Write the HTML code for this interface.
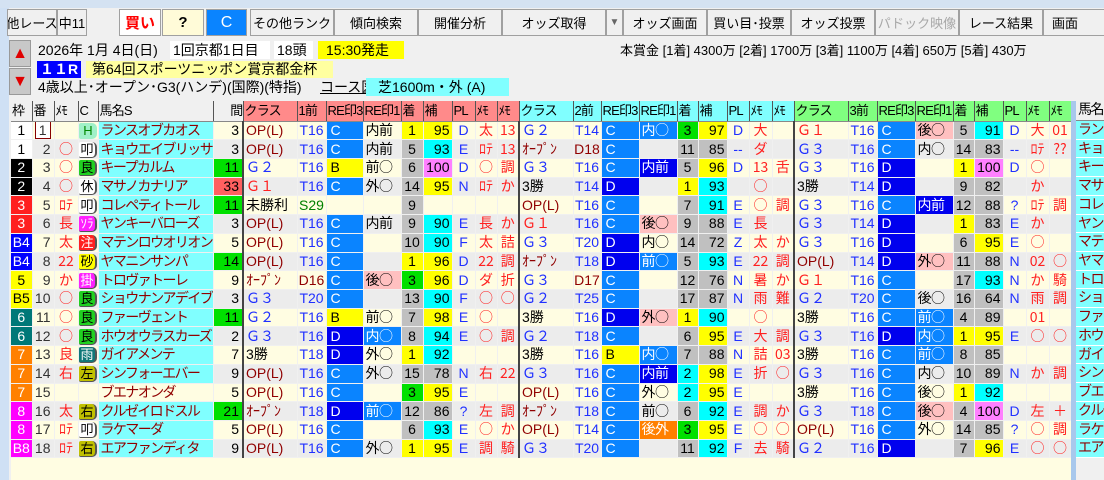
<!DOCTYPE html>
<html><head><meta charset="utf-8">
<style>
*{margin:0;padding:0;box-sizing:border-box}
body{width:1104px;height:480px;overflow:hidden;background:#f0f0f0;font-family:"Liberation Sans","Noto Sans CJK JP",sans-serif;position:relative;color:#000}
.title{position:absolute;left:0;top:0;width:1104px;height:8px;background:#d4e2f2}
.lb{position:absolute;left:0;top:8px;width:9px;height:472px;background:#cfe0f4}
.btn{position:absolute;top:9px;height:27px;border:1px solid #a0a0a0;background:#f0f0f0;font-size:13px;display:flex;align-items:center;justify-content:center;white-space:nowrap;overflow:hidden}
.abs{position:absolute;font-size:14px;white-space:nowrap;line-height:17px}
.box{position:absolute;height:18px;font-size:14px;line-height:18px;white-space:nowrap}
.arrow{position:absolute;left:9px;width:22px;height:27px;background:#c8c8c8;border:1px solid #999;color:#e00000;font-size:16px;text-align:center;line-height:25px}
table{position:absolute;left:11px;top:101px;border-collapse:collapse;table-layout:fixed;font-size:14px;width:1060px}
td{height:18.72px;padding:0;border-right:1px solid transparent;border-bottom:1px solid transparent;background-clip:padding-box;white-space:nowrap;overflow:hidden;line-height:17px;text-align:center}
tr.h td{height:20px;font-size:13px;letter-spacing:-0.8px;text-align:left;padding-left:1px;border-right:1px solid #555;border-bottom:1px solid #888}
tr.h td.n{background:#f0f0f0}
tr.h td.r{background:#ff8a8a}
tr.h td.cy{background:#80ffff}
tr.h td.gn{background:#80ff80}
tr.o{background:#fffde2}
tr.e{background:#ececec}
.k{border-left:2px solid #444!important;text-align:left;padding-left:2px}
.f1{background:#fff;color:#000}.f2{background:#000;color:#fff}.f3{background:#ff2020;color:#fff}.f4{background:#0000ff;color:#fff}.f5{background:#ffff00;color:#000}.f6{background:#007878;color:#fff}.f7{background:#ff8000;color:#fff}.f8{background:#ff00ff;color:#fff}
.num{color:#333;text-align:right;padding-right:3px}
.me{color:#ff2020;font-family:"Noto Sans CJK JP","Liberation Sans",sans-serif;font-size:14px;line-height:17px}
.r1{font-family:"Noto Sans CJK JP",sans-serif;text-align:left;padding-left:2px;letter-spacing:-0.5px}
.ic{display:inline-block;width:18px;height:16px;line-height:16px;font-size:13px;border-radius:2px 5px 5px 2px;border-right:2px solid #555;border-bottom:1px solid #555}
.iw{background:#fff}.ig{background:#20d020}.im{background:#ff20ff;color:#fff}.ir{background:#ff2020;color:#fff}.iy{background:#ffff00}.it{background:#107878;color:#fff}.io{background:#c0c000}.ih{background:#a0f0c8;color:#080;border:none}
.nm{background:#80ffff;color:#900000;text-align:left;padding-left:2px;letter-spacing:-1.6px}
.ma{text-align:right;padding-right:3px}
.G{background:#00e000}.R{background:#ff6060}
.tm{color:#900000}.tb{color:#2030ff}.tr{color:#ff2020}.tg{color:#008000}
.C{background:#0a84ff;color:#fff;text-align:left;padding-left:4px}
.D{background:#0000ee;color:#fff;text-align:left;padding-left:4px}
.B{background:#ffff00;text-align:left;padding-left:4px}
.pk{background:#ffc0c0}.bl{background:#0a84ff;color:#fff}.db{background:#0000ee;color:#fff}.or{background:#ff8000;color:#fff}
.g{background:#c0c0c0}.y{background:#ffff00}.c{background:#00ffff}.gr{background:#00e000}.m{background:#ff80ff}
.hs{text-align:right;padding-right:2px}
.pl{color:#2030ff}
.sb{position:absolute;left:1071px;top:101px;width:5px;height:379px;background:#a8c8ec}
.rn{position:absolute;left:1076px;top:101px;width:28px;font-size:14px}
.rn div{height:18.72px;background:#80ffff;color:#900000;overflow:hidden;white-space:nowrap;border-bottom:1px solid #fff;line-height:17px;padding-left:2px;letter-spacing:-1.5px}
.bot{position:absolute;left:11px;top:458px;width:1060px;height:22px;background:#fffde2}
</style></head><body>
<div class="title"></div>
<div class="lb"></div>
<div class="btn" style="left:7px;width:50px">他レース</div>
<div class="btn" style="left:57px;width:30px">中11</div>
<div class="btn" style="left:119px;width:42px;background:#fff;color:#ff0000;font-weight:bold;font-size:15px">買い</div>
<div class="btn" style="left:162px;width:42px;background:#fffbd8;font-weight:bold;font-size:15px">?</div>
<div class="btn" style="left:206px;width:41px;background:#0a84ff;color:#fff;font-size:16px">C</div>
<div class="btn" style="left:250px;width:84px">その他ランク</div>
<div class="btn" style="left:334px;width:84px">傾向検索</div>
<div class="btn" style="left:418px;width:84px">開催分析</div>
<div class="btn" style="left:502px;width:104px">オッズ取得</div>
<div class="btn" style="left:606px;width:17px;color:#666;font-size:10px">▼</div>
<div class="btn" style="left:623px;width:84px">オッズ画面</div>
<div class="btn" style="left:707px;width:84px">買い目･投票</div>
<div class="btn" style="left:791px;width:84px">オッズ投票</div>
<div class="btn" style="left:875px;width:84px;color:#a8a8a8">パドック映像</div>
<div class="btn" style="left:959px;width:84px">レース結果</div>
<div class="btn" style="left:1043px;width:70px;justify-content:flex-start;padding-left:8px">画面</div>

<div class="arrow" style="top:40px">▲</div>
<div class="arrow" style="top:68px">▼</div>
<div class="abs" style="left:38px;top:42px">2026年 1月 4日(日)</div>
<div class="box" style="left:170px;top:41px;width:100px;background:#fff;padding-left:3px">1回京都1日目</div>
<div class="box" style="left:274px;top:41px;width:39px;background:#fff;padding-left:3px">18頭</div>
<div class="box" style="left:318px;top:41px;width:86px;background:#ffff00;padding-left:8px">15:30発走</div>
<div class="box" style="left:37px;top:61px;width:44px;background:#0000ff;color:#fff;font-weight:bold;padding-left:3px;height:17px;line-height:17px">１１R</div>
<div class="box" style="left:86px;top:61px;width:247px;background:#ffffa0;padding-left:6px;height:17px;line-height:17px">第64回スポーツニッポン賞京都金杯</div>
<div class="abs" style="left:38px;top:79px">4歳以上･オープン･G3(ハンデ)(国際)(特指)</div>
<div class="abs" style="left:320px;top:79px;text-decoration:underline">コース図</div>
<div class="box" style="left:366px;top:78px;width:143px;background:#80ffff;padding-left:12px">芝1600m・外 (A)</div>
<div class="abs" style="left:620px;top:42px;font-size:13px">本賞金 [1着] 4300万 [2着] 1700万 [3着] 1100万 [4着] 650万 [5着] 430万</div>

<div class="bot"></div>
<table>
<colgroup><col style="width:21px"><col style="width:22px"><col style="width:24px"><col style="width:20px"><col style="width:115px"><col style="width:30px"><col style="width:54px"><col style="width:29px"><col style="width:37px"><col style="width:38px"><col style="width:22px"><col style="width:29px"><col style="width:23px"><col style="width:22px"><col style="width:22px"><col style="width:54px"><col style="width:28px"><col style="width:38px"><col style="width:38px"><col style="width:21px"><col style="width:29px"><col style="width:22px"><col style="width:23px"><col style="width:22px"><col style="width:54px"><col style="width:29px"><col style="width:38px"><col style="width:38px"><col style="width:21px"><col style="width:29px"><col style="width:23px"><col style="width:23px"><col style="width:22px"></colgroup>
<tr class="h"><td class="n">枠</td><td class="n">番</td><td class="n">ﾒﾓ</td><td class="n">C</td><td class="n">馬名S</td><td class="n" style="text-align:right">間</td><td class="r">クラス</td><td class="r">1前</td><td class="r">RE印3</td><td class="r">RE印1</td><td class="r">着</td><td class="r">補</td><td class="r">PL</td><td class="r">ﾒﾓ</td><td class="r">ﾒﾓ</td><td class="cy">クラス</td><td class="cy">2前</td><td class="cy">RE印3</td><td class="cy">RE印1</td><td class="cy">着</td><td class="cy">補</td><td class="cy">PL</td><td class="cy">ﾒﾓ</td><td class="cy">ﾒﾓ</td><td class="gn">クラス</td><td class="gn">3前</td><td class="gn">RE印3</td><td class="gn">RE印1</td><td class="gn">着</td><td class="gn">補</td><td class="gn">PL</td><td class="gn">ﾒﾓ</td><td class="gn">ﾒﾓ</td></tr>

<tr class="o"><td class="f1">1</td><td class="num"><span style="border:1px solid #800;padding:0 3px;background:#fff">1</span></td><td class="me"></td><td><span class="ic ih">H</span></td><td class="nm">ランスオブカオス</td><td class="ma">3</td>
<td class="k tm">OP(L)</td><td class="tb">T16</td><td class="C">C</td><td class="r1">内前</td><td class="y">1</td><td class="y hs">95</td><td class="pl">D</td><td class="me">太</td><td class="me">13</td>
<td class="k tb">Ｇ２</td><td class="tb">T14</td><td class="C">C</td><td class="r1 bl">内○</td><td class="gr">3</td><td class="y hs">97</td><td class="pl">D</td><td class="me">大</td><td class="me"></td>
<td class="k tr">Ｇ１</td><td class="tb">T16</td><td class="C">C</td><td class="r1 pk">後○</td><td class="g">5</td><td class="c hs">91</td><td class="pl">D</td><td class="me">大</td><td class="me">01</td></tr>

<tr class="e"><td class="f1">1</td><td class="num">2</td><td class="me">○</td><td><span class="ic iw">叩</span></td><td class="nm">キョウエイブリッサ</td><td class="ma">3</td>
<td class="k tm">OP(L)</td><td class="tb">T16</td><td class="C">C</td><td class="r1">内前</td><td class="g">5</td><td class="c hs">93</td><td class="pl">E</td><td class="me">ﾛﾃ</td><td class="me">13</td>
<td class="k tm">ｵｰﾌﾟﾝ</td><td class="tm">D18</td><td class="C">C</td><td class="r1"></td><td class="g">11</td><td class="g hs">85</td><td class="pl">--</td><td class="me">ダ</td><td class="me"></td>
<td class="k tb">Ｇ３</td><td class="tb">T16</td><td class="C">C</td><td class="r1">内○</td><td class="g">14</td><td class="g hs">83</td><td class="pl">--</td><td class="me">ﾛﾃ</td><td class="me">??</td></tr>

<tr class="o"><td class="f2">2</td><td class="num">3</td><td class="me">○</td><td><span class="ic ig">良</span></td><td class="nm">キープカルム</td><td class="ma G">11</td>
<td class="k tb">Ｇ２</td><td class="tb">T16</td><td class="B">B</td><td class="r1">前○</td><td class="g">6</td><td class="m hs">100</td><td class="pl">D</td><td class="me">○</td><td class="me">調</td>
<td class="k tb">Ｇ３</td><td class="tb">T16</td><td class="C">C</td><td class="r1 db">内前</td><td class="g">5</td><td class="y hs">96</td><td class="pl">D</td><td class="me">13</td><td class="me">舌</td>
<td class="k tb">Ｇ３</td><td class="tb">T16</td><td class="D">D</td><td class="r1"></td><td class="y">1</td><td class="m hs">100</td><td class="pl">D</td><td class="me">○</td><td class="me"></td></tr>

<tr class="e"><td class="f2">2</td><td class="num">4</td><td class="me">○</td><td><span class="ic iw">休</span></td><td class="nm">マサノカナリア</td><td class="ma R">33</td>
<td class="k tr">Ｇ１</td><td class="tb">T16</td><td class="C">C</td><td class="r1">外○</td><td class="g">14</td><td class="y hs">95</td><td class="pl">N</td><td class="me">ﾛﾃ</td><td class="me">か</td>
<td class="k">3勝</td><td class="tb">T14</td><td class="D">D</td><td class="r1"></td><td class="y">1</td><td class="c hs">93</td><td class="pl"></td><td class="me">○</td><td class="me"></td>
<td class="k">3勝</td><td class="tb">T14</td><td class="D">D</td><td class="r1"></td><td class="g">9</td><td class="g hs">82</td><td class="pl"></td><td class="me">か</td><td class="me"></td></tr>

<tr class="o"><td class="f3">3</td><td class="num">5</td><td class="me">ﾛﾃ</td><td><span class="ic iw">叩</span></td><td class="nm">コレペティトール</td><td class="ma G">11</td>
<td class="k">未勝利</td><td class="tg">S29</td><td></td><td class="r1"></td><td class="g">9</td><td></td><td class="pl"></td><td class="me"></td><td class="me"></td>
<td class="k tm">OP(L)</td><td class="tb">T16</td><td class="C">C</td><td class="r1"></td><td class="g">7</td><td class="c hs">91</td><td class="pl">E</td><td class="me">○</td><td class="me">調</td>
<td class="k tb">Ｇ３</td><td class="tb">T16</td><td class="C">C</td><td class="r1 db">内前</td><td class="g">12</td><td class="g hs">88</td><td class="pl">?</td><td class="me">ﾛﾃ</td><td class="me">調</td></tr>

<tr class="e"><td class="f3">3</td><td class="num">6</td><td class="me">長</td><td><span class="ic im">ｿﾗ</span></td><td class="nm">ヤンキーバローズ</td><td class="ma">3</td>
<td class="k tm">OP(L)</td><td class="tb">T16</td><td class="C">C</td><td class="r1">内前</td><td class="g">9</td><td class="c hs">90</td><td class="pl">E</td><td class="me">長</td><td class="me">か</td>
<td class="k tr">Ｇ１</td><td class="tb">T16</td><td class="C">C</td><td class="r1 pk">後○</td><td class="g">9</td><td class="g hs">88</td><td class="pl">E</td><td class="me">長</td><td class="me"></td>
<td class="k tb">Ｇ３</td><td class="tb">T14</td><td class="D">D</td><td class="r1"></td><td class="y">1</td><td class="g hs">83</td><td class="pl">E</td><td class="me">か</td><td class="me"></td></tr>

<tr class="o"><td class="f4">B4</td><td class="num">7</td><td class="me">太</td><td><span class="ic ir">注</span></td><td class="nm">マテンロウオリオン</td><td class="ma">5</td>
<td class="k tm">OP(L)</td><td class="tb">T16</td><td class="C">C</td><td class="r1"></td><td class="g">10</td><td class="c hs">90</td><td class="pl">F</td><td class="me">太</td><td class="me">詰</td>
<td class="k tb">Ｇ３</td><td class="tb">T20</td><td class="D">D</td><td class="r1">内○</td><td class="g">14</td><td class="g hs">72</td><td class="pl">Z</td><td class="me">太</td><td class="me">か</td>
<td class="k tb">Ｇ３</td><td class="tb">T16</td><td class="D">D</td><td class="r1"></td><td class="g">6</td><td class="y hs">95</td><td class="pl">E</td><td class="me">○</td><td class="me"></td></tr>

<tr class="e"><td class="f4">B4</td><td class="num">8</td><td class="me">22</td><td><span class="ic iy">砂</span></td><td class="nm">ヤマニンサンパ</td><td class="ma G">14</td>
<td class="k tm">OP(L)</td><td class="tb">T16</td><td class="C">C</td><td class="r1"></td><td class="y">1</td><td class="y hs">96</td><td class="pl">D</td><td class="me">22</td><td class="me">調</td>
<td class="k tm">ｵｰﾌﾟﾝ</td><td class="tb">T18</td><td class="D">D</td><td class="r1 bl">前○</td><td class="g">5</td><td class="c hs">93</td><td class="pl">E</td><td class="me">22</td><td class="me">調</td>
<td class="k tm">OP(L)</td><td class="tb">T14</td><td class="D">D</td><td class="r1 pk">外○</td><td class="g">11</td><td class="g hs">88</td><td class="pl">N</td><td class="me">02</td><td class="me">○</td></tr>

<tr class="o"><td class="f5">5</td><td class="num">9</td><td class="me">か</td><td><span class="ic im">掛</span></td><td class="nm">トロヴァトーレ</td><td class="ma">9</td>
<td class="k tm">ｵｰﾌﾟﾝ</td><td class="tm">D16</td><td class="C">C</td><td class="r1 pk">後○</td><td class="gr">3</td><td class="y hs">96</td><td class="pl">D</td><td class="me">ダ</td><td class="me">折</td>
<td class="k tb">Ｇ３</td><td class="tm">D17</td><td class="C">C</td><td class="r1"></td><td class="g">12</td><td class="g hs">76</td><td class="pl">N</td><td class="me">暑</td><td class="me">か</td>
<td class="k tr">Ｇ１</td><td class="tb">T16</td><td class="C">C</td><td class="r1"></td><td class="g">17</td><td class="c hs">93</td><td class="pl">N</td><td class="me">か</td><td class="me">騎</td></tr>

<tr class="e"><td class="f5">B5</td><td class="num">10</td><td class="me">○</td><td><span class="ic ig">良</span></td><td class="nm">ショウナンアデイブ</td><td class="ma">3</td>
<td class="k tb">Ｇ３</td><td class="tb">T20</td><td class="C">C</td><td class="r1"></td><td class="g">13</td><td class="c hs">90</td><td class="pl">F</td><td class="me">○</td><td class="me">○</td>
<td class="k tb">Ｇ２</td><td class="tb">T25</td><td class="C">C</td><td class="r1"></td><td class="g">17</td><td class="g hs">87</td><td class="pl">N</td><td class="me">雨</td><td class="me">難</td>
<td class="k tb">Ｇ２</td><td class="tb">T20</td><td class="C">C</td><td class="r1">後○</td><td class="g">16</td><td class="g hs">64</td><td class="pl">N</td><td class="me">雨</td><td class="me">調</td></tr>

<tr class="o"><td class="f6">6</td><td class="num">11</td><td class="me">○</td><td><span class="ic ig">良</span></td><td class="nm">ファーヴェント</td><td class="ma G">11</td>
<td class="k tb">Ｇ２</td><td class="tb">T16</td><td class="B">B</td><td class="r1">前○</td><td class="g">7</td><td class="y hs">98</td><td class="pl">E</td><td class="me">○</td><td class="me"></td>
<td class="k">3勝</td><td class="tb">T16</td><td class="D">D</td><td class="r1 pk">外○</td><td class="y">1</td><td class="c hs">90</td><td class="pl"></td><td class="me">○</td><td class="me"></td>
<td class="k">3勝</td><td class="tb">T16</td><td class="C">C</td><td class="r1 bl">前○</td><td class="g">4</td><td class="g hs">89</td><td class="pl"></td><td class="me">01</td><td class="me"></td></tr>

<tr class="e"><td class="f6">6</td><td class="num">12</td><td class="me">○</td><td><span class="ic ig">良</span></td><td class="nm">ホウオウラスカーズ</td><td class="ma">2</td>
<td class="k tb">Ｇ３</td><td class="tb">T16</td><td class="D">D</td><td class="r1 bl">内○</td><td class="g">8</td><td class="c hs">94</td><td class="pl">E</td><td class="me">○</td><td class="me">調</td>
<td class="k tb">Ｇ２</td><td class="tb">T18</td><td class="C">C</td><td class="r1"></td><td class="g">6</td><td class="y hs">95</td><td class="pl">E</td><td class="me">大</td><td class="me">調</td>
<td class="k tb">Ｇ３</td><td class="tb">T16</td><td class="D">D</td><td class="r1 bl">内○</td><td class="y">1</td><td class="y hs">95</td><td class="pl">E</td><td class="me">○</td><td class="me">○</td></tr>

<tr class="o"><td class="f7">7</td><td class="num">13</td><td class="me">良</td><td><span class="ic it">雨</span></td><td class="nm">ガイアメンテ</td><td class="ma">7</td>
<td class="k">3勝</td><td class="tb">T18</td><td class="D">D</td><td class="r1">外○</td><td class="y">1</td><td class="c hs">92</td><td class="pl"></td><td class="me"></td><td class="me"></td>
<td class="k">3勝</td><td class="tb">T16</td><td class="B">B</td><td class="r1 bl">内○</td><td class="g">7</td><td class="g hs">88</td><td class="pl">N</td><td class="me">詰</td><td class="me">03</td>
<td class="k">3勝</td><td class="tb">T16</td><td class="C">C</td><td class="r1 bl">前○</td><td class="g">8</td><td class="g hs">85</td><td class="pl"></td><td class="me"></td><td class="me"></td></tr>

<tr class="e"><td class="f7">7</td><td class="num">14</td><td class="me">右</td><td><span class="ic io">左</span></td><td class="nm">シンフォーエバー</td><td class="ma">9</td>
<td class="k tm">OP(L)</td><td class="tb">T16</td><td class="C">C</td><td class="r1">外○</td><td class="g">15</td><td class="g hs">78</td><td class="pl">N</td><td class="me">右</td><td class="me">22</td>
<td class="k tb">Ｇ３</td><td class="tb">T16</td><td class="C">C</td><td class="r1 db">内前</td><td class="c">2</td><td class="y hs">98</td><td class="pl">E</td><td class="me">折</td><td class="me">○</td>
<td class="k tb">Ｇ３</td><td class="tb">T16</td><td class="C">C</td><td class="r1">内○</td><td class="g">10</td><td class="g hs">89</td><td class="pl">N</td><td class="me">か</td><td class="me">調</td></tr>

<tr class="o"><td class="f7">7</td><td class="num">15</td><td class="me"></td><td></td><td class="nm" style="background:none">ブエナオンダ</td><td class="ma">5</td>
<td class="k tm">OP(L)</td><td class="tb">T16</td><td class="C">C</td><td class="r1"></td><td class="gr">3</td><td class="y hs">95</td><td class="pl">E</td><td class="me"></td><td class="me"></td>
<td class="k tm">OP(L)</td><td class="tb">T16</td><td class="C">C</td><td class="r1">外○</td><td class="c">2</td><td class="y hs">95</td><td class="pl">E</td><td class="me"></td><td class="me"></td>
<td class="k">3勝</td><td class="tb">T16</td><td class="C">C</td><td class="r1">後○</td><td class="y">1</td><td class="c hs">92</td><td class="pl"></td><td class="me"></td><td class="me"></td></tr>

<tr class="e"><td class="f8">8</td><td class="num">16</td><td class="me">太</td><td><span class="ic io">右</span></td><td class="nm">クルゼイロドスル</td><td class="ma G">21</td>
<td class="k tm">ｵｰﾌﾟﾝ</td><td class="tb">T18</td><td class="D">D</td><td class="r1 bl">前○</td><td class="g">12</td><td class="g hs">86</td><td class="pl">?</td><td class="me">左</td><td class="me">調</td>
<td class="k tm">ｵｰﾌﾟﾝ</td><td class="tb">T18</td><td class="C">C</td><td class="r1">前○</td><td class="g">6</td><td class="c hs">92</td><td class="pl">E</td><td class="me">調</td><td class="me">か</td>
<td class="k tb">Ｇ３</td><td class="tb">T18</td><td class="C">C</td><td class="r1 pk">後○</td><td class="g">4</td><td class="m hs">100</td><td class="pl">D</td><td class="me">左</td><td class="me">＋</td></tr>

<tr class="o"><td class="f8">8</td><td class="num">17</td><td class="me">ﾛﾃ</td><td><span class="ic iw">叩</span></td><td class="nm">ラケマーダ</td><td class="ma">5</td>
<td class="k tm">OP(L)</td><td class="tb">T16</td><td class="C">C</td><td class="r1"></td><td class="g">6</td><td class="c hs">93</td><td class="pl">E</td><td class="me">○</td><td class="me">か</td>
<td class="k tm">OP(L)</td><td class="tb">T14</td><td class="C">C</td><td class="r1 or">後外</td><td class="gr">3</td><td class="y hs">95</td><td class="pl">E</td><td class="me">○</td><td class="me">○</td>
<td class="k tm">OP(L)</td><td class="tb">T16</td><td class="C">C</td><td class="r1">外○</td><td class="g">14</td><td class="g hs">85</td><td class="pl">?</td><td class="me">○</td><td class="me">調</td></tr>

<tr class="e"><td class="f8">B8</td><td class="num">18</td><td class="me">ﾛﾃ</td><td><span class="ic io">右</span></td><td class="nm">エアファンディタ</td><td class="ma">9</td>
<td class="k tm">OP(L)</td><td class="tb">T16</td><td class="C">C</td><td class="r1">外○</td><td class="y">1</td><td class="y hs">95</td><td class="pl">E</td><td class="me">調</td><td class="me">騎</td>
<td class="k tb">Ｇ３</td><td class="tb">T20</td><td class="C">C</td><td class="r1"></td><td class="g">11</td><td class="c hs">92</td><td class="pl">F</td><td class="me">去</td><td class="me">騎</td>
<td class="k tb">Ｇ２</td><td class="tb">T16</td><td class="D">D</td><td class="r1"></td><td class="g">7</td><td class="y hs">96</td><td class="pl">E</td><td class="me">○</td><td class="me">○</td></tr>
</table>
<div class="sb"></div>
<div class="rn"><div style="background:#f0f0f0;color:#000;height:20px;border-bottom:1px solid #888">馬名</div><div>ランス</div><div>キョウ</div><div>キープ</div><div>マサノ</div><div>コレペ</div><div>ヤンキ</div><div>マテン</div><div>ヤマニ</div><div>トロヴ</div><div>ショウ</div><div>ファー</div><div>ホウオ</div><div>ガイア</div><div>シンフ</div><div>ブエナ</div><div>クルゼ</div><div>ラケマ</div><div>エアフ</div></div>
</body></html>
